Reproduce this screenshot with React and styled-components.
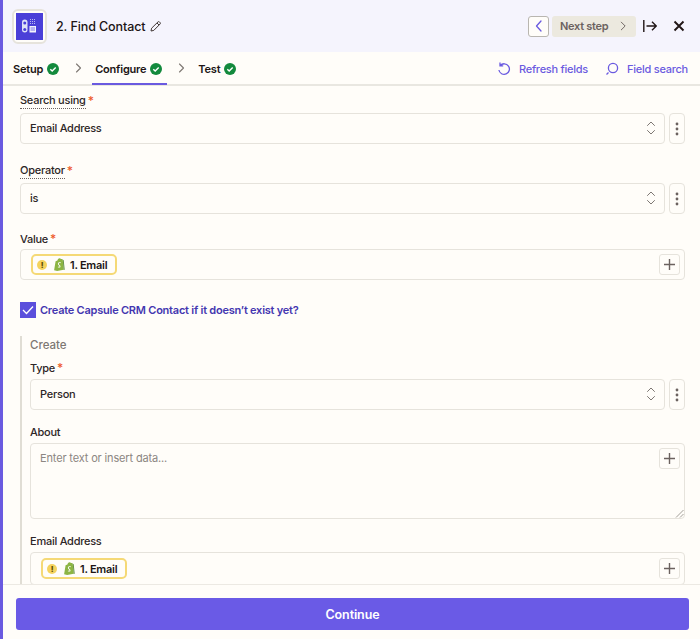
import React from "react";
import styled, { createGlobalStyle } from "styled-components";

const Global = createGlobalStyle`
  html, body { margin: 0; padding: 0; height: 639px; overflow: hidden; background: #fffdf9; }
  * { box-sizing: border-box; }
  #root { height: 639px; }
`;

const Panel = styled.div`
  width: 700px; height: 639px; display: flex; flex-direction: column;
  border-left: 3px solid #6a5ae0; background: #fffdf9; color: #2d2e2e;
  font-family: Inter, "Liberation Sans", sans-serif; overflow: hidden;
`;
const Header = styled.header`
  height: 52px; flex: none; background: #f5f4fd; display: flex; align-items: center;
  padding: 0 15px 0 9px;
`;
const AppTile = styled.div`
  width: 35px; height: 35px; border: 2px solid #e6e3dc; border-radius: 6px; background: #fffdf9;
  display: flex; align-items: center; justify-content: center;
`;
const Title = styled.h1`
  margin: 1px 0 0 9px; font-size: 12.5px; line-height: 20px; font-weight: 500; color: #201515; letter-spacing: -.1px;
`;
const Pencil = styled.span`display: flex; margin-left: 5px; color: #413735;`;
const HeaderActions = styled.div`margin-left: auto; display: flex; align-items: center;`;
const BackButton = styled.button`
  width: 21px; height: 21px; padding: 0; border: 1px solid #b9b6b0; border-radius: 3px; background: #fffdf9;
  display: flex; align-items: center; justify-content: center; color: #6a5ae0;
`;
const NextButton = styled.button`
  width: 84px; height: 21px; margin-left: 3px; padding: 0 7px 0 8px; border: 0; border-radius: 3px; background: #ece9df;
  display: flex; align-items: center; justify-content: space-between; color: #6b625f;
  font: 600 11px Inter, "Liberation Sans", sans-serif; letter-spacing: -.3px;
`;
const IconButton = styled.span`display: flex; color: #201515; margin-left: ${p => p.$gap}px;`;

const Tabs = styled.nav`
  height: 34px; flex: none; display: flex; align-items: stretch; padding: 0 12px 0 0;
  border-bottom: 2px solid #e9e7e1;
`;
const Tab = styled.div`
  position: relative; display: flex; align-items: center; gap: 4px; padding: ${p => p.$pad};
  font-size: 11px; letter-spacing: -.2px; font-weight: 600; color: #201515;
  ${p => p.$active && `&::after { content: ""; position: absolute; left: 0; right: 0; bottom: -1px; height: 2px; background: #6a5ae0; }`}
`;
const Sep = styled.span`display: flex; align-items: center; color: #7d7773; margin: ${p => p.$m};`;
const TabTools = styled.div`margin-left: auto; display: flex; align-items: center; gap: 17px;`;
const Tool = styled.div`
  display: flex; align-items: center; gap: 8px; padding-top: 1px; color: #6a5ae0; font-size: 11px; letter-spacing: -.25px; font-weight: 500;
`;

const Scroll = styled.main`flex: 1; min-height: 0; overflow: hidden; padding: 6px 15px 0 17px;`;
const Field = styled.section`margin-bottom: ${p => p.$mb}px;`;
const Label = styled.div`
  display: flex; align-items: flex-start; height: ${p => p.$h || 21}px; padding-top: ${p => p.$pt || 0}px;
  font-size: 11px; letter-spacing: -.25px; line-height: ${p => p.$lh || 16}px; font-weight: 500; color: #2d2626;
`;
const LabelText = styled.span`
  ${p => p.$dotted && "border-bottom: 1px dotted #6b625f; line-height: 15px; height: 16px;"}
`;
const Req = styled.span`color: #ee5b2b; margin-left: 2px; font-size: 12px;`;
const Row = styled.div`display: flex; gap: 4px;`;
const Select = styled.div`
  flex: 1; height: 31px; border: 1.5px solid #e6e3dc; border-radius: 4px; background: #fffdf9;
  display: flex; align-items: center; justify-content: space-between; padding: 0 7px 2px 9px;
  font-size: 11px; letter-spacing: -.25px; font-weight: 500; color: #2d2626;
`;
const Kebab = styled.div`
  width: 16px; height: 31px; border: 1.5px solid #e6e3dc; border-radius: 4px;
  display: flex; align-items: center; justify-content: center; color: #6b625f;
`;
const InputBox = styled.div`
  height: ${p => p.$h || 31}px; border: 1.5px solid #e6e3dc; border-radius: 4px; background: #fffdf9;
  display: flex; justify-content: space-between; align-items: ${p => p.$top ? "flex-start" : "center"};
  padding: ${p => p.$top ? "4px 4px 0 9px" : "0 4px 0 10px"}; position: relative;
`;
const Placeholder = styled.span`margin-top: 3px; font-size: 11px; letter-spacing: -.15px; color: #8c8682;`;
const Pill = styled.div`
  height: 21px; display: flex; align-items: center; gap: 5px; padding: 0 8px 0 4px;
  border: 2px solid #f5d976; border-radius: 5px; font-size: 11px; letter-spacing: -.25px; font-weight: 600; color: #201515;
`;
const Warn = styled.span`
  width: 10px; height: 10px; margin-right: 2px; border-radius: 50%; background: #f4d35e; color: #5b4a00; display: flex; align-items: center;
  justify-content: center; font-size: 8px; font-weight: 800; line-height: 1;
`;
const Plus = styled.button`
  width: 21px; height: 21px; padding: 0; border: 1.5px solid #e6e3dc; border-radius: 3px; background: #fffdf9; color: #6b625f;
  display: flex; align-items: center; justify-content: center;
`;
const Grip = styled.svg`position: absolute; right: 0; bottom: 0;`;
const CheckRow = styled.label`display: flex; align-items: center; gap: 4px; margin-bottom: 18px;`;
const CheckBox = styled.span`
  width: 16px; height: 16px; background: #5b4fdc; display: flex; align-items: center; justify-content: center;
`;
const CheckLabel = styled.span`font-size: 11px; letter-spacing: -.23px; font-weight: 600; color: #4336b0;`;
const Group = styled.div`border-left: 2px solid #e0ddd4; padding-left: 8px;`;
const GroupTitle = styled.div`height: 23px; padding-top: 1px; font-size: 11.5px; line-height: 16px; font-weight: 500; color: #7d7773;`;

const Footer = styled.footer`
  height: 55px; flex: none; border-top: 1px solid #ece9e3; padding: 13px 11px 0 13px; background: #fffdf9;
`;
const Continue = styled.button`
  width: 100%; height: 32px; border: 0; border-radius: 3px; background: #6a5ae6; color: #fff;
  font: 600 12.5px Inter, "Liberation Sans", sans-serif; letter-spacing: -.1px;
`;

const Chevron = ({ d = "m5.500 3 4 4-4 4", size = 14, sw = 1.1 }) => (
  <svg width={size} height={size} viewBox="0 0 14 14" fill="none" stroke="currentColor" strokeWidth={sw} strokeLinecap="round" strokeLinejoin="round"><path d={d} /></svg>
);
const Done = () => (
  <svg width="12" height="12" viewBox="0 0 12 12"><circle cx="6" cy="6" r="6" fill="#138a3d" /><path d="m3.300 6.200 1.900 1.800 3.500-3.600" fill="none" stroke="#fff" strokeWidth="1.400" /></svg>
);
const UpDown = () => (
  <svg width="12" height="16" viewBox="0 0 12 16" fill="none" stroke="#7d7773" strokeWidth="1" strokeLinecap="round" strokeLinejoin="round"><path d="m2.500 5.500 3.500-3.500 3.500 3.500M2.500 10.500 6 14l3.500-3.500" /></svg>
);
const Dots = () => (
  <svg width="4" height="14" viewBox="0 0 4 14" fill="currentColor"><circle cx="2" cy="2" r="1.400" /><circle cx="2" cy="7" r="1.400" /><circle cx="2" cy="12" r="1.400" /></svg>
);
const PlusIcon = () => (
  <svg width="13" height="13" viewBox="0 0 13 13" fill="none" stroke="currentColor" strokeWidth="1.400"><path d="M6.500 1v11M1 6.500h11" /></svg>
);
const Shopify = () => (
  <svg width="11" height="13" viewBox="0 0 11 13"><path d="M1.600 3.200 3.400 2.500C3.800 1 4.700.2 5.600.2c.7 0 1 .5 1.200.8l1.100-.1.9 1 .9 9.900-6.600 1.200-3-.8z" fill="#8db543" /><path d="M7.900.9 8.800 2l.9 9.900 1-.2L9.700 2.200z" fill="#5e8e3e" /><path d="M6.700 5.300c-.4-.2-1.600-.4-1.900.4-.3 1 2.100 1.300 1.700 3-.3 1.200-1.900 1-2.700.5l.2-.8c.5.300 1.400.5 1.500 0 .2-.8-1.900-1.200-1.600-2.800.3-1.500 2-1.500 3-1.100z" fill="#fff" /></svg>
);
const EmailPill = () => (
  <Pill><Warn>!</Warn><Shopify />1. Email</Pill>
);

export default function App() {
  return (
    <Panel>
      <Global />
      <Header>
        <AppTile>
          <svg width="27" height="27" viewBox="0 0 27 27">
            <rect width="27" height="27" fill="#4a3fd8" />
            <rect x="6" y="6.500" width="5.500" height="13" rx="2.750" fill="#dfe2f7" />
            <circle cx="8.750" cy="10" r="1.500" fill="#4a3fd8" />
            <circle cx="8.750" cy="16.500" r="1.500" fill="#4a3fd8" />
            <rect x="13.500" y="13" width="6.500" height="6.500" fill="#f3f3fc" />
            <path d="M14.500 15h4.500M14.500 17h4.500" stroke="#4a3fd8" strokeWidth=".7" />
            <path d="M14 6.500h6M14 8.500h6M14 10.500h6" stroke="#b9b7f0" strokeWidth="1" strokeDasharray="1 1" />
          </svg>
        </AppTile>
        <Title>2. Find Contact</Title>
        <Pencil>
          <svg width="11" height="11" viewBox="0 0 11 11" fill="none" stroke="currentColor" strokeWidth="1"><path d="M1 10l.6-2.800L8 .9a1 1 0 0 1 1.400 0l.7.7a1 1 0 0 1 0 1.400L3.800 9.400zM7 2l2 2" /></svg>
        </Pencil>
        <HeaderActions>
          <BackButton><Chevron d="M9 2 4.500 7 9 12" size={14} sw={1.300} /></BackButton>
          <NextButton>Next step<Chevron d="m5 2.500 4.500 4.500L5 11.500" size={12} /></NextButton>
          <IconButton $gap={7}>
            <svg width="14" height="12" viewBox="0 0 14 12" fill="none" stroke="currentColor" strokeWidth="1.400"><path d="M.8 0v12M3.500 6h9.800M9 1.700 13.300 6 9 10.300" /></svg>
          </IconButton>
          <IconButton $gap={16}>
            <svg width="12" height="12" viewBox="0 0 12 12" fill="none" stroke="currentColor" strokeWidth="1.900"><path d="m1.500 1.500 9 9M10.500 1.500l-9 9" /></svg>
          </IconButton>
        </HeaderActions>
      </Header>
      <Tabs>
        <Tab $pad="1px 0 0 10px">Setup <Done /></Tab>
        <Sep $m="0 7px 0 12px"><Chevron /></Sep>
        <Tab $active $pad="1px 5px 0 3px">Configure <Done /></Tab>
        <Sep $m="0 10px 0 7px"><Chevron /></Sep>
        <Tab $pad="1px 0 0">Test <Done /></Tab>
        <TabTools>
          <Tool>
            <svg width="14" height="14" viewBox="0 0 14 14" fill="none" stroke="currentColor" strokeWidth="1.300"><path d="M3.200 3.500A5.300 5.300 0 1 1 1.900 8M3 .6v3.200h3.200" /></svg>
            Refresh fields
          </Tool>
          <Tool>
            <svg width="14" height="14" viewBox="0 0 14 14" fill="none" stroke="currentColor" strokeWidth="1.300"><circle cx="8" cy="6" r="4.600" /><path d="m3.500 10.500-2 2" /></svg>
            Field search
          </Tool>
        </TabTools>
      </Tabs>
      <Scroll>
        <Field $mb={18}>
          <Label $pt={1}><LabelText $dotted>Search using</LabelText><Req>*</Req></Label>
          <Row><Select>Email Address<UpDown /></Select><Kebab><Dots /></Kebab></Row>
        </Field>
        <Field $mb={17}>
          <Label $pt={1}><LabelText $dotted>Operator</LabelText><Req>*</Req></Label>
          <Row><Select>is<UpDown /></Select><Kebab><Dots /></Kebab></Row>
        </Field>
        <Field $mb={22}>
          <Label $h={18}><LabelText>Value</LabelText><Req>*</Req></Label>
          <InputBox><EmailPill /><Plus><PlusIcon /></Plus></InputBox>
        </Field>
        <CheckRow>
          <CheckBox>
            <svg width="12" height="10" viewBox="0 0 12 10" fill="none" stroke="#fff" strokeWidth="1.300"><path d="m1 5 3.500 3.500L11 1.500" /></svg>
          </CheckBox>
          <CheckLabel>Create Capsule CRM Contact if it doesn’t exist yet?</CheckLabel>
        </CheckRow>
        <Group>
          <GroupTitle>Create</GroupTitle>
          <Field $mb={15}>
            <Label $h={20} $pt={1}><LabelText>Type</LabelText><Req>*</Req></Label>
            <Row><Select>Person<UpDown /></Select><Kebab><Dots /></Kebab></Row>
          </Field>
          <Field $mb={15}>
            <Label $h={18} $lh={14}><LabelText>About</LabelText></Label>
            <InputBox $h={76} $top>
              <Placeholder>Enter text or insert data...</Placeholder>
              <Plus><PlusIcon /></Plus>
              <Grip width="9" height="9" viewBox="0 0 9 9" fill="none" stroke="#8c8682" strokeWidth=".8"><path d="M1 8.500 8.500 1M5 8.500 8.500 5" /></Grip>
            </InputBox>
          </Field>
          <Field $mb={0}>
            <Label $h={18} $lh={14}><LabelText>Email Address</LabelText></Label>
            <InputBox $h={33}><EmailPill /><Plus><PlusIcon /></Plus></InputBox>
          </Field>
        </Group>
      </Scroll>
      <Footer><Continue>Continue</Continue></Footer>
    </Panel>
  );
}
